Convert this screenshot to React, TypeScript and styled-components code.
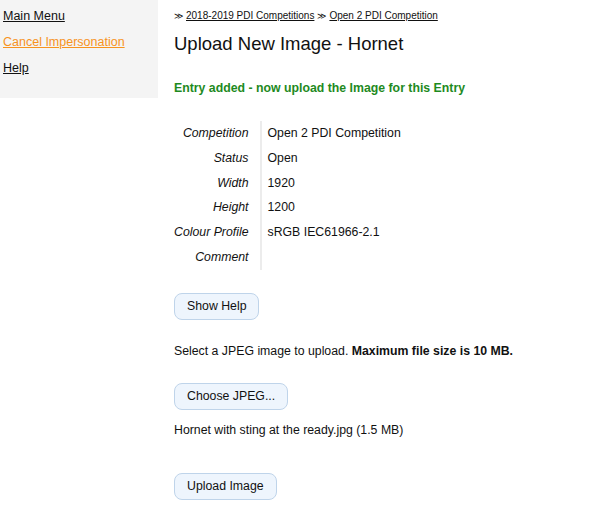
import React from "react";
import styled, { createGlobalStyle } from "styled-components";

const Global = createGlobalStyle`
  html, body { margin: 0; padding: 0; background: #fff; }
  body { font-family: "Liberation Sans", Arial, Helvetica, sans-serif; font-size: 12.3px; color: #111; }
`;

const Page = styled.div`
  display: flex;
  align-items: flex-start;
`;

const Sidebar = styled.nav`
  width: 158px;
  height: 98px;
  background: #f4f4f4;
  box-sizing: border-box;
  padding: 9px 0 0 3px;
  display: flex;
  flex-direction: column;
  gap: 11px;
`;

const NavLink = styled.a<{ $accent?: boolean }>`
  color: ${(p) => (p.$accent ? "#f7931e" : "#111")};
  text-decoration: underline;
  font-size: 12.5px;
  line-height: 15px;
`;

const Main = styled.main`
  margin-left: 16px;
  display: flex;
  flex-direction: column;
  align-items: flex-start;
`;

const Crumbs = styled.div`
  margin-top: 10px;
  font-size: 10px;
  line-height: 12px;
  color: #111;
  display: flex;
  gap: 3px;
  align-items: center;
`;

const Sep = styled.span`
  font-size: 9px;
`;

const Crumb = styled.a`
  color: #111;
  text-decoration: underline;
`;

const Title = styled.h1`
  margin: 10px 0 0;
  font-size: 18.5px;
  font-weight: normal;
  line-height: 24px;
`;

const Notice = styled.p`
  margin: 25px 0 0;
  color: #1e8a1e;
  font-weight: bold;
  font-size: 12.3px;
  line-height: 15px;
`;

const Details = styled.div`
  margin-top: 25px;
  display: grid;
  grid-template-columns: auto auto;
`;

const Label = styled.div`
  font-style: italic;
  text-align: right;
  padding-right: 11px;
  border-right: 2px solid #ececec;
  height: 24.8px;
  line-height: 24.8px;
`;

const Value = styled.div`
  padding-left: 6px;
  height: 24.8px;
  line-height: 24.8px;
`;

const Button = styled.button<{ $top: number }>`
  margin-top: ${(p) => p.$top}px;
  font-family: "Liberation Sans", Arial, Helvetica, sans-serif;
  font-size: 12.3px;
  color: #111;
  height: 27px;
  padding: 0 12px;
  background: #eef5fd;
  border: 1px solid #bfd4ea;
  border-radius: 8px;
`;

const Text = styled.p<{ $top: number }>`
  margin: ${(p) => p.$top}px 0 0;
  line-height: 15px;
`;

const rows: [string, string][] = [
  ["Competition", "Open 2 PDI Competition"],
  ["Status", "Open"],
  ["Width", "1920"],
  ["Height", "1200"],
  ["Colour Profile", "sRGB IEC61966-2.1"],
  ["Comment", ""],
];

export default function App() {
  return (
    <>
      <Global />
      <Page>
        <Sidebar>
          <NavLink href="#">Main Menu</NavLink>
          <NavLink href="#" $accent>Cancel Impersonation</NavLink>
          <NavLink href="#">Help</NavLink>
        </Sidebar>
        <Main>
          <Crumbs>
            <Sep>≫</Sep>
            <Crumb href="#">2018-2019 PDI Competitions</Crumb>
            <Sep>≫</Sep>
            <Crumb href="#">Open 2 PDI Competition</Crumb>
          </Crumbs>
          <Title>Upload New Image - Hornet</Title>
          <Notice>Entry added - now upload the Image for this Entry</Notice>
          <Details>
            {rows.map(([l, v]) => (
              <React.Fragment key={l}>
                <Label>{l}</Label>
                <Value>{v}</Value>
              </React.Fragment>
            ))}
          </Details>
          <Button $top={23}>Show Help</Button>
          <Text $top={24}>
            Select a JPEG image to upload. <b>Maximum file size is 10 MB.</b>
          </Text>
          <Button $top={24}>Choose JPEG...</Button>
          <Text $top={13}>Hornet with sting at the ready.jpg (1.5 MB)</Text>
          <Button $top={35}>Upload Image</Button>
        </Main>
      </Page>
    </>
  );
}
